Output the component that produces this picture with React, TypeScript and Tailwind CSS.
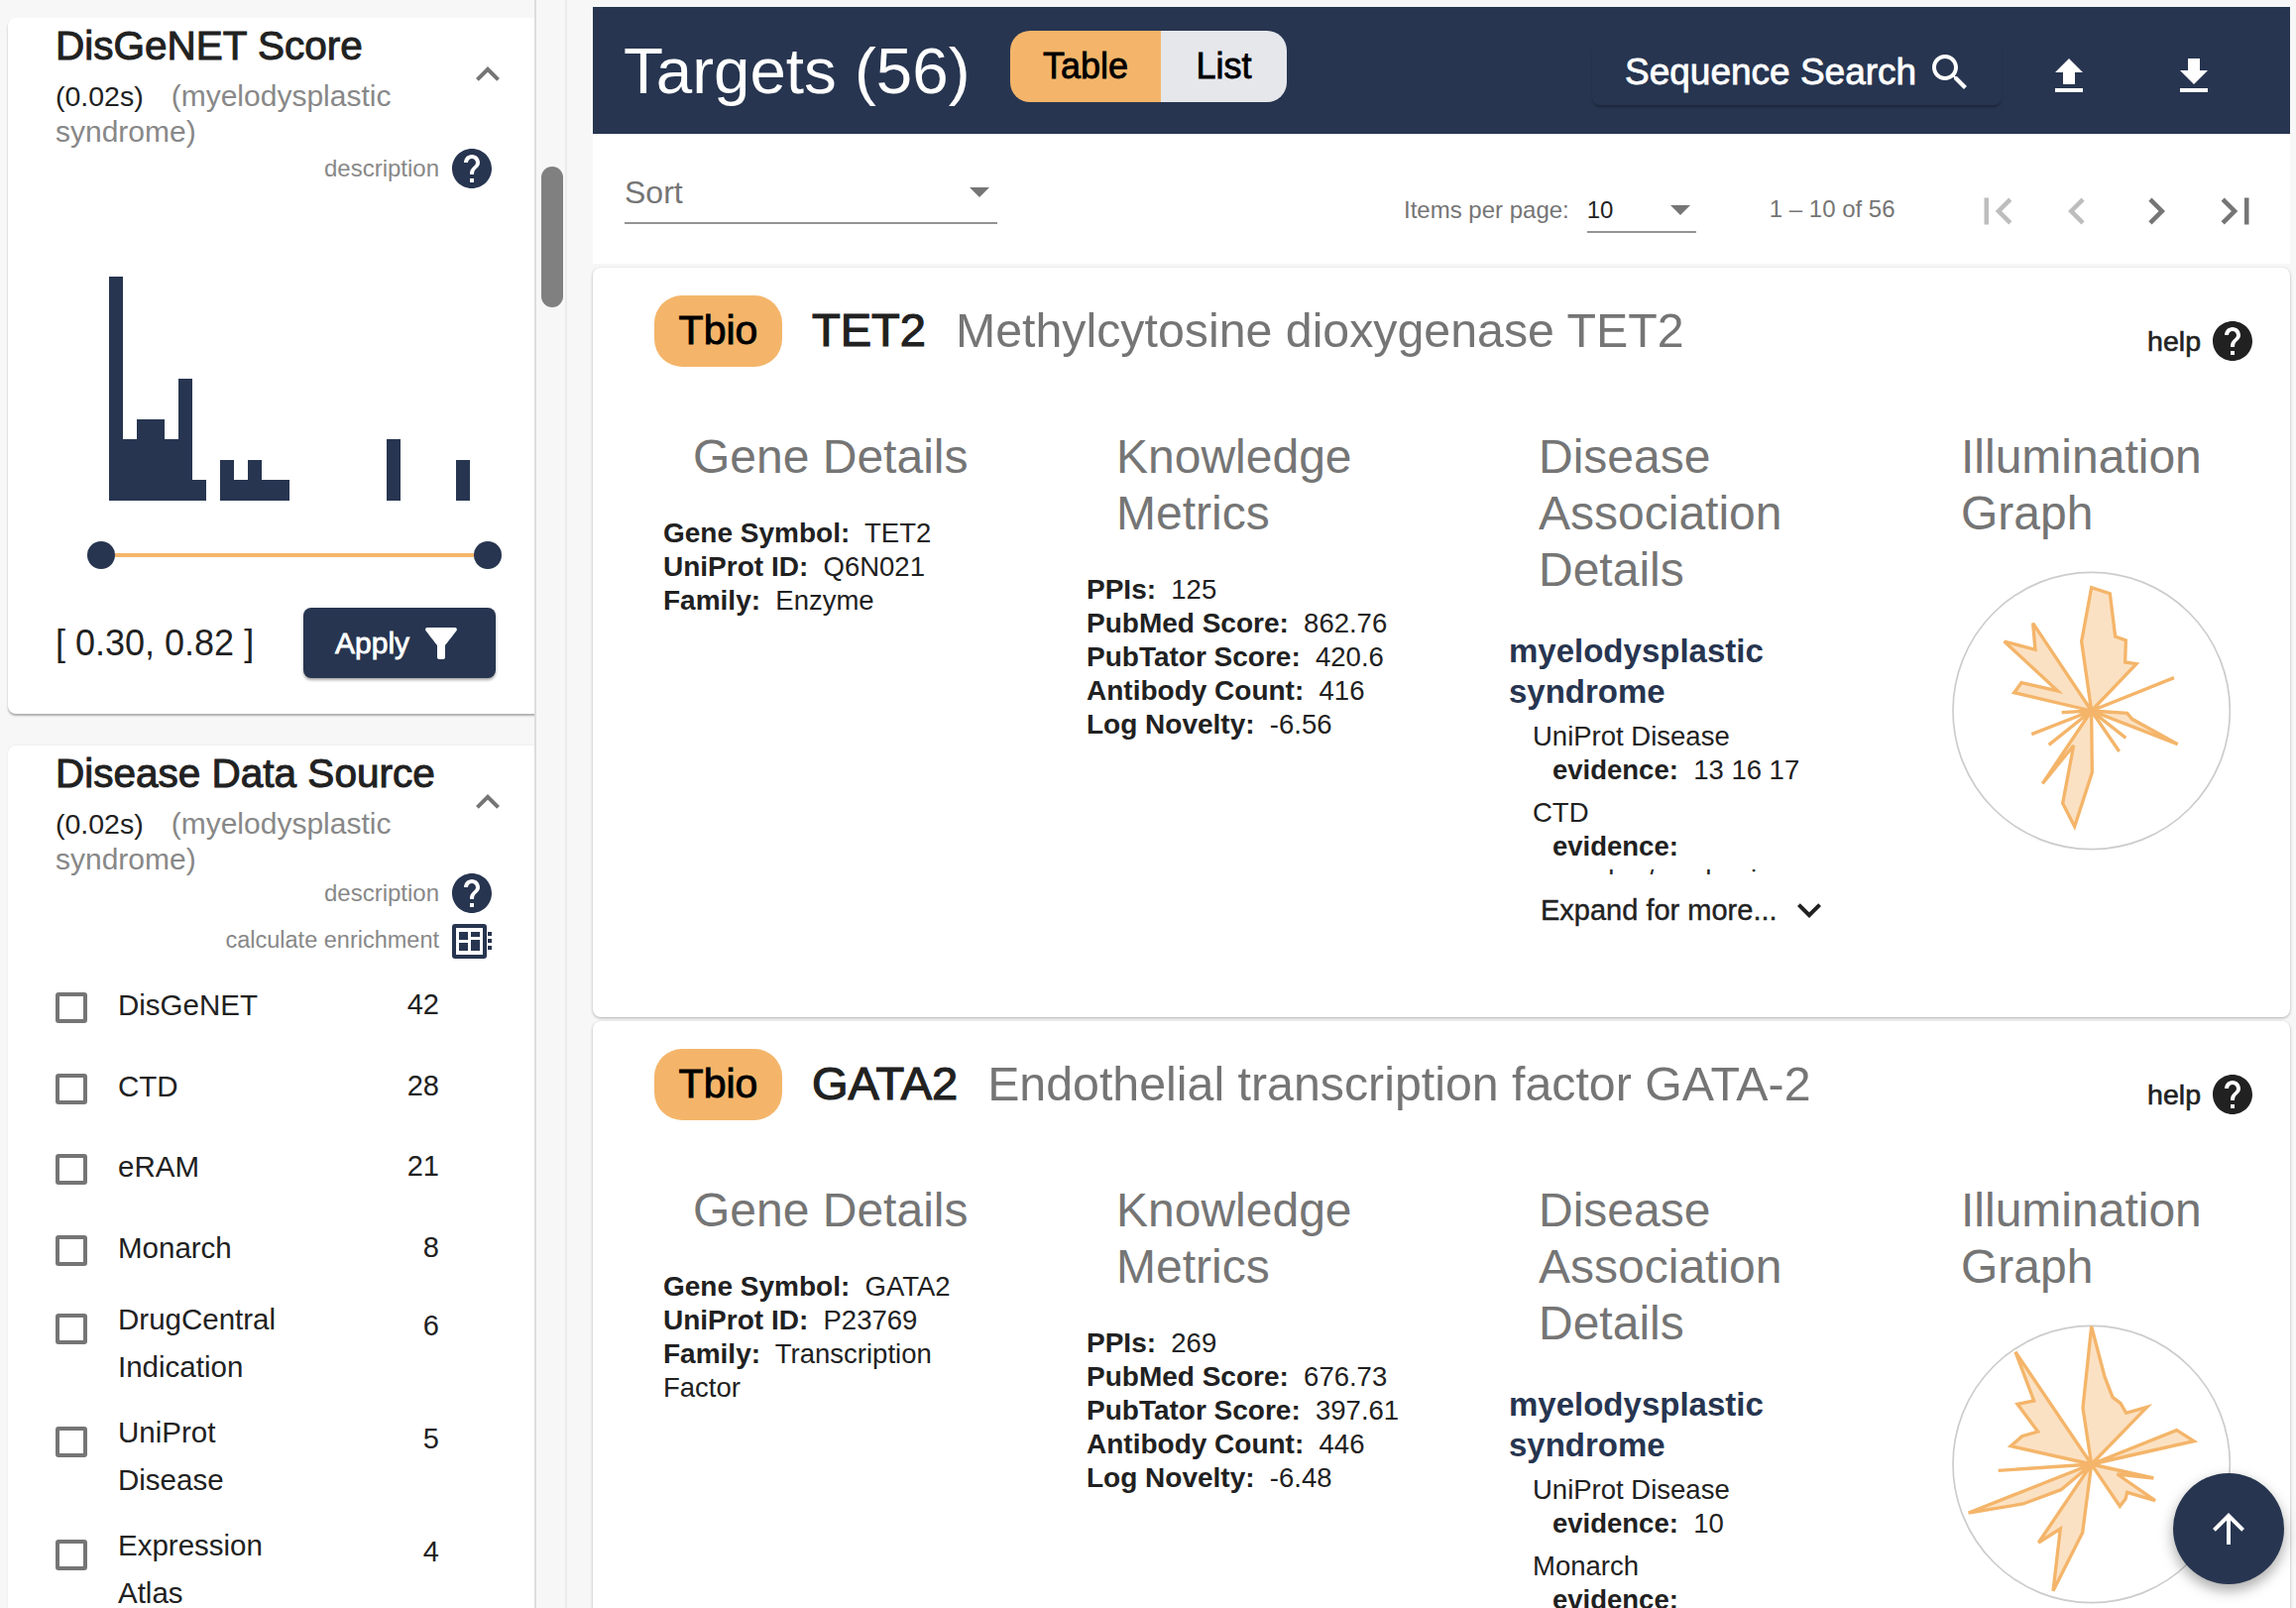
const NAVY_BINS = [11, 3, 4, 4, 3, 6, 1, 0, 2, 1, 2, 1, 1, 0, 0, 0, 0, 0, 0, 0, 3, 0, 0, 0, 0, 2];

const sources = [
  { lines: ["DisGeNET"], n: 42, h: "h-[81.5px]" },
  { lines: ["CTD"], n: 28, h: "h-[81.5px]" },
  { lines: ["eRAM"], n: 21, h: "h-[81.5px]" },
  { lines: ["Monarch"], n: 8, h: "h-[79.5px]" },
  { lines: ["DrugCentral", "Indication"], n: 6, h: "h-[114px]" },
  { lines: ["UniProt", "Disease"], n: 5, h: "h-[114px]" },
  { lines: ["Expression", "Atlas"], n: 4, h: "h-[114px]" },
];

const RADAR_A =
  "M632 535L602 325L632 162L688 180L704 310L736 322L734 388L768 393L632 535L882 435L632 535L740 542L755 560L893 636L632 535L736 617L632 535L716 658L632 535L634 722L581 885L545 815L578 640L484 755L632 535L503 638L632 535L451 606L632 535L542 540L632 535L398 480L420 450L530 475L368 325L462 350L455 270Z";
const RADAR_B =
  "M632 535L606 365L632 118L672 270L696 332L720 350L737 380L800 362L632 535L890 432L942 465L632 535L820 577L710 565L825 645L740 620L735 640L718 662L632 535L605 742L516 918L538 730L472 772L632 535L540 612L425 655L260 682L632 535L350 554L632 535L388 480L422 450L470 436L408 353L458 343L402 195Z";

const HELP =
  "M12 2C6.48 2 2 6.48 2 12s4.48 10 10 10 10-4.48 10-10S17.52 2 12 2zm1 17h-2v-2h2v2zm2.07-7.75l-.9.92C13.45 12.9 13 13.5 13 15h-2v-.5c0-1.1.45-2.1 1.17-2.83l1.24-1.26c.37-.36.59-.86.59-1.41 0-1.1-.9-2-2-2s-2 .9-2 2H8c0-2.21 1.79-4 4-4s4 1.79 4 4c0 .88-.36 1.68-.93 2.25z";

function Icon({ d, className }: { d: string; className?: string }) {
  return (
    <svg viewBox="0 0 24 24" className={className} fill="currentColor">
      <path d={d} />
    </svg>
  );
}

function Histogram() {
  return (
    <svg width="365" height="226" viewBox="0 0 365 226" shapeRendering="crispEdges" className="block ml-[54px]">
      {NAVY_BINS.map((v, i) => (
        <rect key={i} x={i * 14} y={226 - v * 20.55} width="14" height={v * 20.55} fill="#273550" />
      ))}
    </svg>
  );
}

function PanelHead({ title }: { title: string }) {
  return (
    <div className="flex">
      <div className="w-[412px]">
        <div className="pt-[5px] text-[40.5px] leading-[46px] [-webkit-text-stroke:1px_#212121] text-[#212121] whitespace-nowrap">{title}</div>
        <div className="mt-[10px] text-[30px] leading-[36px] text-[#888888]">
          <span className="text-[#212121] text-[28.5px]">(0.02s)</span>
          <span className="ml-7">(myelodysplastic syndrome)</span>
        </div>
      </div>
      <Icon d="M12 8l-6 6 1.41 1.41L12 10.83l4.59 4.58L18 14z" className="w-12 h-12 mt-[33px] text-[#757575] shrink-0" />
    </div>
  );
}

function InfoRow({ label, children, className, small }: { label: string; children: React.ReactNode; className?: string; small?: boolean }) {
  return (
    <div className={`flex items-center justify-end w-[444px] ${className ?? ""}`}>
      <span className={`${small ? "text-[23.5px]" : "text-[24px]"} text-[#888888] mr-[9px]`}>{label}</span>
      {children}
    </div>
  );
}

function ScorePanel() {
  return (
    <section className="w-[540px] h-[702px] ml-2 pl-12 bg-white rounded-lg shadow-[0_2px_2px_rgba(0,0,0,0.3)]">
      <PanelHead title="DisGeNET Score" />
      <InfoRow label="description" className="h-10 -mt-[1px]">
        <Icon d={HELP} className="w-12 h-12 text-[#273550]" />
      </InfoRow>
      <div className="mt-[89px]">
        <Histogram />
      </div>
      <div className="flex items-center w-[418px] ml-8 mt-[41px]">
        <div className="w-7 h-7 rounded-full bg-[#273550] shrink-0" />
        <div className="flex-1 h-1 bg-[#f4b56a]" />
        <div className="w-7 h-7 rounded-full bg-[#273550] shrink-0" />
      </div>
      <div className="flex items-center justify-between w-[444px] mt-[39px]">
        <span className="text-[36px] text-[#212121] whitespace-nowrap">[ 0.30, 0.82 ]</span>
        <button className="flex items-center w-[194px] h-[71px] pl-8 rounded-lg bg-[#273550] text-white text-[30px] [-webkit-text-stroke:0.8px_white] shadow-[0_2px_3px_rgba(0,0,0,0.35)]">
          Apply
          <Icon
            d="M4.25 5.61C6.27 8.2 10 13 10 13v6c0 .55.45 1 1 1h2c.55 0 1-.45 1-1v-6s3.72-4.8 5.74-7.39c.51-.66.04-1.61-.79-1.61H5.04c-.83 0-1.3.95-.79 1.61z"
            className="w-12 h-12 ml-2"
          />
        </button>
      </div>
    </section>
  );
}

function SourcePanel() {
  return (
    <section className="w-[540px] mt-8 ml-2 pl-12 bg-white rounded-t-lg shadow-[0_0_2px_rgba(0,0,0,0.1)]">
      <PanelHead title="Disease Data Source" />
      <InfoRow label="description" className="h-10 -mt-[4px]">
        <Icon d={HELP} className="w-12 h-12 text-[#273550]" />
      </InfoRow>
      <InfoRow label="calculate enrichment" small className="h-9 mt-[10px]">
        <svg viewBox="0 0 40 35" className="w-10 h-[35px] ml-1 mr-1 text-[#273550]" fill="currentColor">
          <path d="M3 0h29a3 3 0 0 1 3 3v29a3 3 0 0 1-3 3H3a3 3 0 0 1-3-3V3a3 3 0 0 1 3-3zm1 4v27h27V4z" />
          <path d="M7 8h9v8H7zM19 8h9v5h-9zM7 19h9v8H7zM19 16h9v11h-9z" />
          <path d="M36 8h4v4h-4zM36 15h4v4h-4zM36 22h4v4h-4z" />
        </svg>
      </InfoRow>
      <div className="mt-[23px] w-[387px]">
        {sources.map((s) => (
          <div key={s.lines[0]} className={`flex items-start ${s.h}`}>
            <div className="w-8 h-[31px] mt-[11px] border-4 border-[#757575] rounded-[3px] shrink-0" />
            <div className={`ml-[31px] flex-1 text-[29.5px] leading-[48px] text-[#212121] ${s.lines.length > 1 ? "-mt-[7px]" : ""}`}>
              {s.lines.map((l) => (
                <div key={l}>{l}</div>
              ))}
            </div>
            <div className="text-[29px] leading-[48px] -mt-[1px] text-[#212121]">{s.n}</div>
          </div>
        ))}
      </div>
    </section>
  );
}

function Sidebar() {
  return (
    <aside className="flex w-[572px] h-full shrink-0 border-r-2 border-[#ececec]">
      <div className="w-[541px] h-full pt-[18px] border-r-2 border-[#dddddd] overflow-hidden shrink-0">
        <ScorePanel />
        <SourcePanel />
      </div>
      <div className="flex-1 pt-[168px] pl-[5px]">
        <div className="w-[22px] h-[142px] rounded-full bg-[#808080]" />
      </div>
    </aside>
  );
}

function Header() {
  return (
    <header className="flex items-start h-[128px] shrink-0 pl-[31px] bg-[#273550] text-white">
      <h1 className="w-[390px] mt-[27px] text-[65.5px] leading-[76px] whitespace-nowrap">Targets (56)</h1>
      <div className="flex w-[279px] h-[72px] mt-6 rounded-[20px] overflow-hidden text-[36px] [-webkit-text-stroke:0.8px_black] text-black">
        <div className="flex items-center justify-center w-[152px] bg-[#f4b56a]">Table</div>
        <div className="flex items-center justify-center flex-1 bg-[#e5e7eb]">List</div>
      </div>
      <button className="flex items-center w-[413px] h-[66px] mt-[33px] ml-[308px] pl-[33px] rounded-lg shadow-[0_3px_3px_-1px_rgba(0,0,0,0.3)] text-[37px] [-webkit-text-stroke:0.8px_white]">
        Sequence Search
        <Icon
          d="M15.5 14h-.79l-.28-.27C15.41 12.59 16 11.11 16 9.5 16 5.91 13.09 3 9.5 3S3 5.91 3 9.5 5.91 16 9.5 16c1.61 0 3.09-.59 4.23-1.57l.27.28v.79l5 4.99L20.49 19l-4.99-5zm-6 0C7.01 14 5 11.99 5 9.5S7.01 5 9.5 5 14 7.01 14 9.5 11.99 14 9.5 14z"
          className="w-12 h-12 ml-[10px]"
        />
      </button>
      <Icon d="M9 16h6v-6h4l-7-7-7 7h4zm-4 2h14v2H5z" className="w-12 h-12 mt-[46px] ml-[44px]" />
      <Icon d="M19 9h-4V3H9v6H5l7 7 7-7zM5 18v2h14v-2H5z" className="w-12 h-12 mt-[46px] ml-[78px]" />
    </header>
  );
}

function Toolbar() {
  return (
    <div className="flex items-start h-[131px] shrink-0 pl-8 bg-white">
      <div className="relative w-[376px] h-[50px] mt-[41px] border-b-2 border-[#949494] text-[32px] leading-[36px] text-[#757575]">
        Sort
        <span className="absolute right-[8px] top-[13px] border-x-[10px] border-x-transparent border-t-[10px] border-t-[#757575]" />
      </div>
      <span className="ml-[410px] mt-[63px] text-[24px] leading-[28px] text-[#757575]">Items per page:</span>
      <div className="relative w-[110px] h-[37px] mt-[63px] ml-[18px] border-b-2 border-[#949494] text-[24px] leading-[28px] text-[#212121]">
        10
        <span className="absolute right-[6px] top-[9px] border-x-[10px] border-x-transparent border-t-[10px] border-t-[#757575]" />
      </div>
      <span className="ml-[74px] mt-[62px] text-[24px] leading-[28px] text-[#757575] whitespace-nowrap">1 – 10 of 56</span>
      <div className="flex gap-[26px] ml-[76px] mt-[51px]">
        <Icon d="M18.41 16.59L13.82 12l4.59-4.59L17 6l-6 6 6 6zM6 6h2v12H6z" className="w-[54px] h-[54px] text-[#bdbdbd]" />
        <Icon d="M15.41 7.41L14 6l-6 6 6 6 1.41-1.41L10.83 12z" className="w-[54px] h-[54px] text-[#bdbdbd]" />
        <Icon d="M10 6L8.59 7.41 13.17 12l-4.58 4.59L10 18l6-6z" className="w-[54px] h-[54px] text-[#757575]" />
        <Icon d="M5.59 7.41L10.18 12l-4.59 4.59L7 18l6-6-6-6zM16 6h2v12h-2z" className="w-[54px] h-[54px] text-[#757575]" />
      </div>
    </div>
  );
}

function Field({ k, v }: { k: string; v: string }) {
  return (
    <div>
      <b className="font-bold text-[28px]">{k}:</b>
      {"\u00a0 "}
      {v}
    </div>
  );
}

function Heading({ children }: { children: React.ReactNode }) {
  return <h3 className="pl-[30px] w-[370px] text-[48px] leading-[57px] text-[#757575]">{children}</h3>;
}

type Target = {
  gene: string;
  name: string;
  uniprot: string;
  family: string;
  metrics: [string, string][];
  radar: string;
  evidence: { source: string; values: string[] }[];
};

const targets: Target[] = [
  {
    gene: "TET2",
    name: "Methylcytosine dioxygenase TET2",
    uniprot: "Q6N021",
    family: "Enzyme",
    metrics: [
      ["PPIs", "125"],
      ["PubMed Score", "862.76"],
      ["PubTator Score", "420.6"],
      ["Antibody Count", "416"],
      ["Log Novelty", "-6.56"],
    ],
    radar: RADAR_A,
    evidence: [
      { source: "UniProt Disease", values: ["13 16 17"] },
      { source: "CTD", values: ["", "marker/mechanism"] },
    ],
  },
  {
    gene: "GATA2",
    name: "Endothelial transcription factor GATA-2",
    uniprot: "P23769",
    family: "Transcription Factor",
    metrics: [
      ["PPIs", "269"],
      ["PubMed Score", "676.73"],
      ["PubTator Score", "397.61"],
      ["Antibody Count", "446"],
      ["Log Novelty", "-6.48"],
    ],
    radar: RADAR_B,
    evidence: [
      { source: "UniProt Disease", values: ["10"] },
      { source: "Monarch", values: [""] },
    ],
  },
];

function TargetCard({ t }: { t: Target }) {
  return (
    <article className="h-[756px] shrink-0 bg-white rounded-lg shadow-[0_1px_3px_rgba(0,0,0,0.3)]">
      <div className="flex items-start h-[100px] pl-[62px] pr-[34px]">
        <div className="flex items-center justify-center w-[129px] h-[72px] mt-7 rounded-[28px] bg-[#f4b56a] text-[41px] [-webkit-text-stroke:0.9px_black] text-black">
          Tbio
        </div>
        <div className="mt-[35px] ml-[30px] text-[47px] leading-[56px] [-webkit-text-stroke:1.2px_#212121] text-[#212121] whitespace-nowrap">{t.gene}</div>
        <div className="mt-[35px] ml-[30px] text-[48.3px] leading-[56px] text-[#757575] whitespace-nowrap">{t.name}</div>
        <div className="flex items-center ml-auto mt-[50px] text-[28.5px] [-webkit-text-stroke:0.6px_#212121] text-[#212121]">
          help
          <Icon d={HELP} className="w-12 h-12 ml-2" />
        </div>
      </div>
      <div className="grid grid-cols-[427px_426px_426px_1fr] ml-[71px] mt-[62px] text-[27.5px] leading-[34px] text-[#212121]">
        <div>
          <Heading>Gene Details</Heading>
          <div className="mt-8 w-[320px]">
            <Field k="Gene Symbol" v={t.gene} />
            <Field k="UniProt ID" v={t.uniprot} />
            <Field k="Family" v={t.family} />
          </div>
        </div>
        <div>
          <Heading>Knowledge Metrics</Heading>
          <div className="mt-8">
            {t.metrics.map(([k, v]) => (
              <Field key={k} k={k} v={v} />
            ))}
          </div>
        </div>
        <div>
          <Heading>Disease Association Details</Heading>
          <div className="mt-[33px] text-[33px] leading-[41px] font-bold text-[#273550] w-[300px]">myelodysplastic syndrome</div>
          <div className="h-[156px] mt-[8px] ml-[24px] overflow-hidden">
            {t.evidence.map((e) => (
              <div key={e.source} className="mb-[9px]">
                <div>{e.source}</div>
                <div className="ml-5">
                  <b className="font-bold">evidence:</b>
                  {"\u00a0 "}
                  {e.values[0]}
                </div>
                {e.values[1] && <div className="ml-[29px]">{e.values[1]}</div>}
              </div>
            ))}
          </div>
          <div className="flex items-center mt-3 ml-8 text-[29px] leading-[36px] [-webkit-text-stroke:0.4px_#212121] text-[#212121]">
            Expand for more...
            <Icon d="M16.59 8.59L12 13.17 7.41 8.59 6 10l6 6 6-6z" className="w-12 h-12 ml-2" />
          </div>
        </div>
        <div>
          <Heading>Illumination Graph</Heading>
          <svg viewBox="210 112 846 846" className="w-[282px] h-[282px] mt-[30px] ml-[21px]">
            <circle cx="632" cy="535" r="419" fill="white" stroke="#cccccc" strokeWidth="5" />
            <path d={t.radar} fill="#f4b56a" fillOpacity="0.4" stroke="#f4b56a" strokeWidth="10" />
          </svg>
        </div>
      </div>
    </article>
  );
}

export default function App() {
  return (
    <div className="relative flex w-[2316px] h-[1622px] overflow-hidden bg-[#f7f7f7] font-['Liberation_Sans',Arial,sans-serif]">
      <Sidebar />
      <main className="flex flex-col w-[1712px] h-full ml-[26px] pt-[7px]">
        <Header />
        <Toolbar />
        <div className="flex flex-col shrink-0 gap-1 mt-1">
          {targets.map((t) => (
            <TargetCard key={t.gene} t={t} />
          ))}
        </div>
      </main>
      <button className="absolute left-[2192px] top-[1486px] flex items-center justify-center w-28 h-28 rounded-full bg-[#273550] text-white shadow-[0_6px_14px_rgba(0,0,0,0.35)]">
        <Icon d="M4 12l1.41 1.41L11 7.83V20h2V7.83l5.58 5.59L20 12l-8-8-8 8z" className="w-12 h-12" />
      </button>
    </div>
  );
}
